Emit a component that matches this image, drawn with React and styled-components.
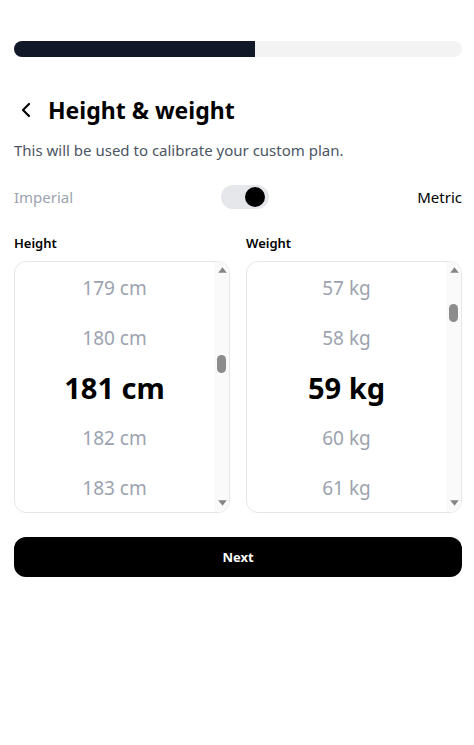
import React from "react";
import styled, { createGlobalStyle } from "styled-components";

const Global = createGlobalStyle`
  html, body { margin: 0; padding: 0; background: #fff; }
  body { font-family: "Noto Sans", "Open Sans", sans-serif; color: #000; }
  * { box-sizing: border-box; }
`;

const Page = styled.div`
  padding: 41px 12px 0 14px;
  width: 474px;
`;

const Progress = styled.div`
  height: 16px;
  border-radius: 8px;
  background: #f3f3f3;
  overflow: hidden;
`;

const ProgressFill = styled.div`
  height: 100%;
  background: #111827;
`;

const TitleRow = styled.div`
  display: flex;
  align-items: center;
  gap: 14px;
  margin-top: 37px;
  height: 32px;
`;

const BackButton = styled.button`
  border: 0;
  background: none;
  padding: 0;
  margin-left: 4px;
  width: 16px;
  height: 24px;
  display: flex;
  align-items: center;
  justify-content: center;
  color: #000;
`;

const Title = styled.h1`
  margin: 0;
  font-size: 23px;
  line-height: 32px;
  font-weight: 700;
`;

const Subtitle = styled.p`
  margin: 13px 0 0;
  font-size: 15px;
  line-height: 22px;
  color: #4b5563;
`;

const UnitRow = styled.div`
  display: flex;
  justify-content: space-between;
  align-items: center;
  margin-top: 24px;
  height: 24px;
`;

const UnitLabel = styled.span`
  font-size: 15px;
  color: ${(p) => (p.$active ? "#000" : "#9ca3af")};
`;

const Switch = styled.div`
  width: 48px;
  height: 24px;
  border-radius: 12px;
  background: #e5e7eb;
  padding: 2px 4px;
  display: flex;
  justify-content: ${(p) => (p.$on ? "flex-end" : "flex-start")};
`;

const Knob = styled.div`
  width: 20px;
  height: 20px;
  border-radius: 50%;
  background: #000;
`;

const Columns = styled.div`
  display: grid;
  grid-template-columns: 1fr 1fr;
  column-gap: 16px;
  margin-top: 25px;
`;

const Column = styled.div`
  display: flex;
  flex-direction: column;
`;

const FieldLabel = styled.div`
  font-size: 13px;
  font-weight: 600;
  line-height: 18px;
  margin-bottom: 9px;
`;

const WheelBox = styled.div`
  height: 252px;
  border: 1px solid #e5e7eb;
  border-radius: 12px;
  overflow: hidden;
  display: flex;
`;

const WheelList = styled.div`
  flex: 1;
  display: flex;
  flex-direction: column;
`;

const WheelItem = styled.div`
  height: 50px;
  padding-top: 1px;
  display: flex;
  align-items: center;
  justify-content: center;
  font-size: ${(p) => (p.$selected ? "29px" : "19px")};
  font-weight: ${(p) => (p.$selected ? 700 : 400)};
  color: ${(p) => (p.$selected ? "#000" : "#9ca3af")};
`;

const Rail = styled.div`
  width: 15px;
  background: #fafafa;
  display: flex;
  flex-direction: column;
`;

const RailArrow = styled.div`
  height: 15px;
  display: flex;
  justify-content: center;
  align-items: ${(p) => (p.$down ? "flex-start" : "flex-end")};
  padding: ${(p) => (p.$down ? "3px 0 0 1px" : "0 0 4px 1px")};
`;

const RailTrack = styled.div`
  flex: 1;
  position: relative;
`;

const Thumb = styled.div`
  position: absolute;
  left: 3px;
  width: 9px;
  height: 18px;
  border-radius: 5px;
  background: #8c8c8c;
`;

const NextButton = styled.button`
  margin-top: 24px;
  width: 100%;
  height: 40px;
  border: 0;
  border-radius: 12px;
  background: #000;
  color: #fff;
  font-family: "Noto Sans", sans-serif;
  font-size: 13px;
  font-weight: 700;
`;

const TRACK = 220;
const THUMB = 18;

function Picker({ from, to, value, unit }) {
  const visible = [];
  for (let v = value - 2; v <= value + 2; v++) visible.push(v);
  const frac = (value - from) / (to - from);
  return (
    <WheelBox>
      <WheelList>
        {visible.map((v) => (
          <WheelItem key={v} $selected={v === value}>
            {v} {unit}
          </WheelItem>
        ))}
      </WheelList>
      <Rail>
        <RailArrow>
          <svg width="9" height="6" viewBox="0 0 9 6">
            <path d="M4.5 0.3 L8.8 5.7 L0.2 5.7 Z" fill="#858585" />
          </svg>
        </RailArrow>
        <RailTrack>
          <Thumb style={{ top: `${frac * (TRACK - THUMB)}px` }} />
        </RailTrack>
        <RailArrow $down>
          <svg width="9" height="6" viewBox="0 0 9 6">
            <path d="M0.2 0.3 L8.8 0.3 L4.5 5.7 Z" fill="#858585" />
          </svg>
        </RailArrow>
      </Rail>
    </WheelBox>
  );
}

export default function App() {
  return (
    <>
      <Global />
      <Page>
        <Progress>
          <ProgressFill style={{ width: "53.8%" }} />
        </Progress>
        <TitleRow>
          <BackButton aria-label="Back">
            <svg width="14" height="16" viewBox="0 0 14 16" fill="none">
              <path d="M10 2 L4 8 L10 14" stroke="#000" strokeWidth="2.2" strokeLinecap="round" strokeLinejoin="round" />
            </svg>
          </BackButton>
          <Title>Height &amp; weight</Title>
        </TitleRow>
        <Subtitle>This will be used to calibrate your custom plan.</Subtitle>
        <UnitRow>
          <UnitLabel>Imperial</UnitLabel>
          <Switch $on>
            <Knob />
          </Switch>
          <UnitLabel $active>Metric</UnitLabel>
        </UnitRow>
        <Columns>
          <Column>
            <FieldLabel>Height</FieldLabel>
            <Picker from={100} to={310} value={181} unit="cm" />
          </Column>
          <Column>
            <FieldLabel>Weight</FieldLabel>
            <Picker from={30} to={250} value={59} unit="kg" />
          </Column>
        </Columns>
        <NextButton>Next</NextButton>
      </Page>
    </>
  );
}
